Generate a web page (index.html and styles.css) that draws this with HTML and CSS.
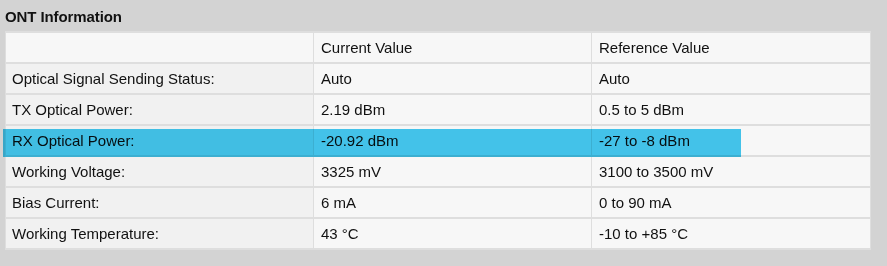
FILE: index.html
```html
<!DOCTYPE html>
<html>
<head>
<meta charset="utf-8">
<link rel="stylesheet" href="styles.css">
</head>
<body>
<div class="page">
  <h1 class="title">ONT Information</h1>
  <table class="info">
    <colgroup><col class="c1"><col class="c2"><col class="c3"></colgroup>
    <tr class="head"><td></td><td>Current Value</td><td>Reference Value</td></tr>
    <tr><td class="lbl">Optical Signal Sending Status:</td><td>Auto</td><td>Auto</td></tr>
    <tr><td class="lbl">TX Optical Power:</td><td>2.19 dBm</td><td>0.5 to 5 dBm</td></tr>
    <tr><td class="lbl">RX Optical Power:</td><td>-20.92 dBm</td><td>-27 to -8 dBm</td></tr>
    <tr><td class="lbl">Working Voltage:</td><td>3325 mV</td><td>3100 to 3500 mV</td></tr>
    <tr><td class="lbl">Bias Current:</td><td>6 mA</td><td>0 to 90 mA</td></tr>
    <tr><td class="lbl">Working Temperature:</td><td>43 °C</td><td>-10 to +85 °C</td></tr>
  </table>
  <div class="marker"></div>
</div>
</body>
</html>
```
FILE: styles.css
```css
html, body {
  margin: 0;
  padding: 0;
  background: #d3d3d3;
}
.page {
  position: relative;
  width: 887px;
  height: 266px;
  font-family: "Liberation Sans", Arial, sans-serif;
  color: #111;
}
.title {
  margin: 0;
  padding: 8px 0 0 5px;
  height: 23px;
  font-size: 15px;
  font-weight: bold;
  line-height: 18px;
  letter-spacing: -0.1px;
}
.info {
  margin-left: 5px;
  width: 866px;
  border-collapse: separate;
  border-spacing: 1px 2px;
  background: #dedede;
  table-layout: fixed;
  font-size: 15px;
}
.c1 { width: 307px; }
.c2 { width: 277px; }
.c3 { width: 278px; }
.info td {
  height: 29px;
  padding: 0 0 0 7px;
  background: #f7f7f7;
  line-height: 17px;
  white-space: nowrap;
}
.info td.lbl {
  background: #f1f1f1;
  padding-left: 6px;
}
.marker {
  position: absolute;
  left: 3px;
  top: 129px;
  width: 738px;
  height: 28px;
  background: #45c9f1;
  mix-blend-mode: multiply;
}
```
